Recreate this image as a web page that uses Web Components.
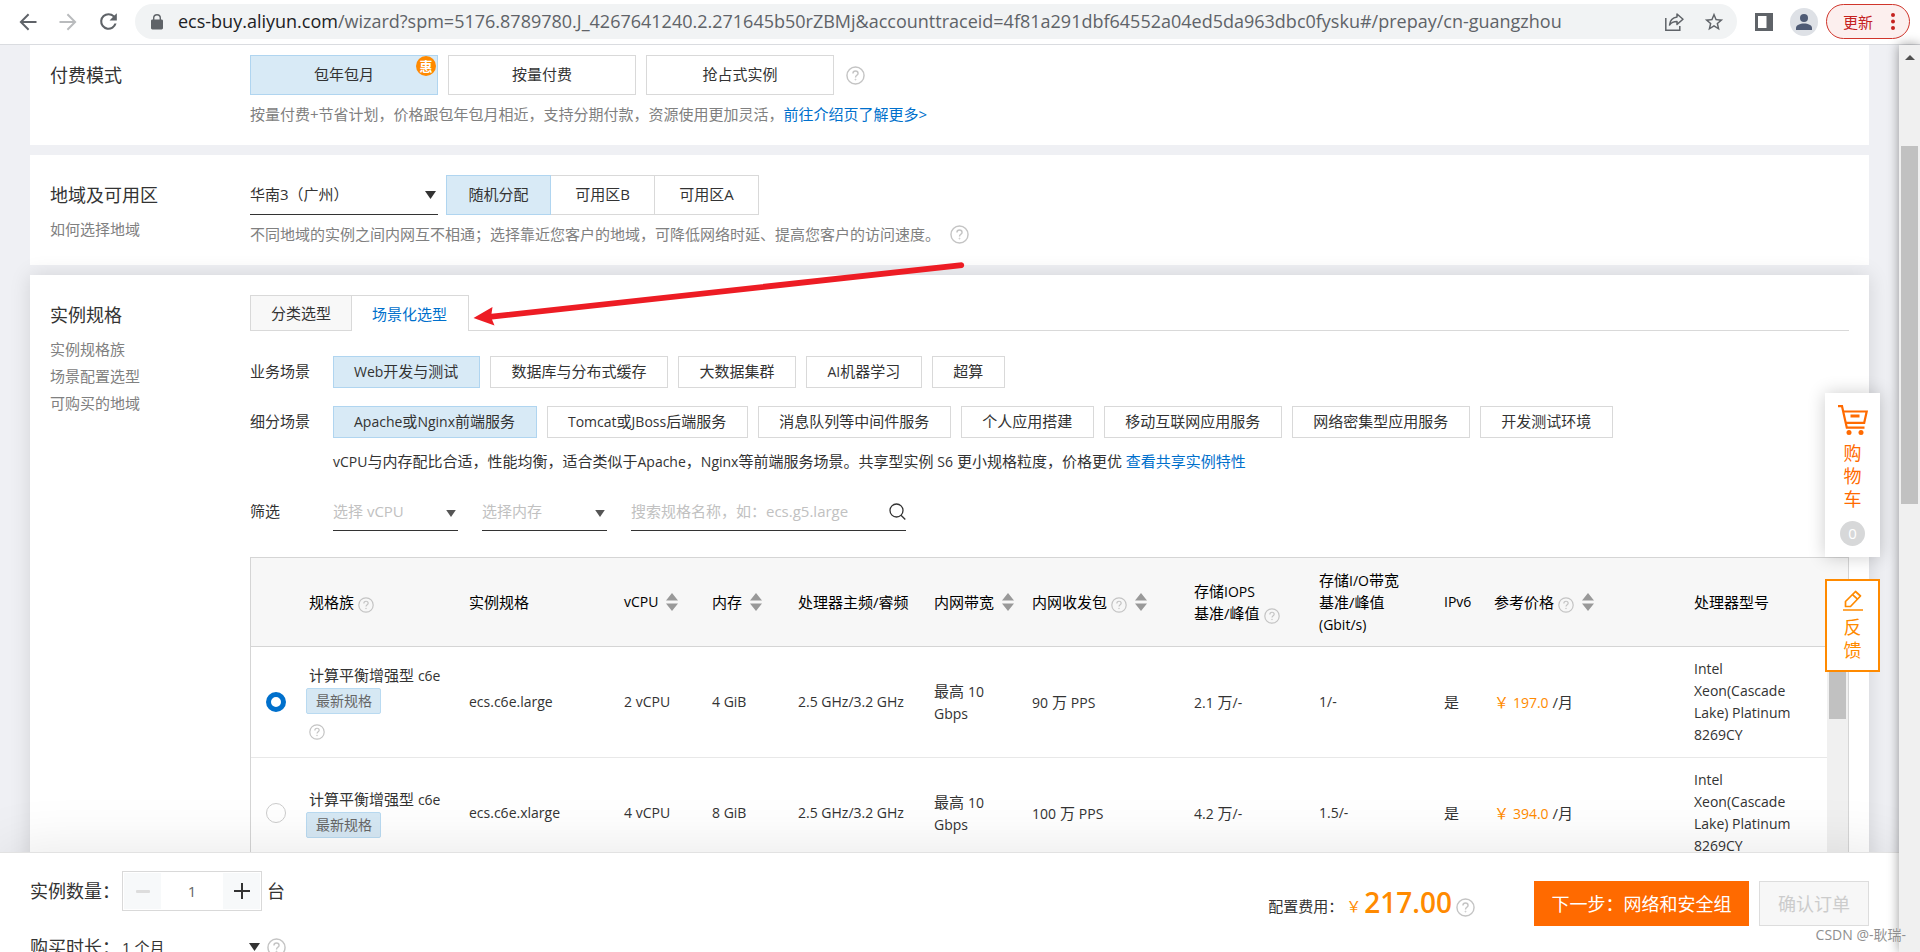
<!DOCTYPE html>
<html lang="zh-CN">
<head>
<meta charset="utf-8">
<title>云服务器 ECS 购买</title>
<style>
  html, body { margin: 0; height: 100%; }
  body {
    font: 15px/22px "Open Sans", "Noto Sans CJK SC", sans-serif;
    color: #333;
    overflow: hidden;
  }
</style>
</head>
<body>
<buy-app></buy-app>

<script>
const BASE = `
  * { box-sizing: border-box; }
  button, input, select { font: inherit; color: inherit; margin: 0; }
  button { cursor: pointer; }
  a { color: #0070cc; text-decoration: none; }
  svg { display: block; }
  .en { font-size: 14px; }
  span.en { line-height: 1; }
`;

function define(name, css, html) {
  const template = document.createElement('template');
  template.innerHTML = `<style>${BASE}${css}</style>${html}`;
  customElements.define(name, class extends HTMLElement {
    constructor() {
      super();
      this.attachShadow({ mode: 'open' }).append(template.content.cloneNode(true));
    }
  });
}

/* Round question mark */
define('help-icon', `
  :host { display: inline-block; width: 19px; height: 19px; color: #c4c4c4; flex: none; }
  :host([small]) { width: 16px; height: 16px; }
  svg { width: 100%; height: 100%; }
`, `
  <svg viewBox="0 0 20 20" fill="none" stroke="currentColor" stroke-width="1.5" aria-hidden="true">
    <circle cx="10" cy="10" r="9"/>
    <path d="M7.3 8C7.3 6.3 8.5 5.3 10 5.3s2.7 1 2.7 2.5c0 1.8-2.7 2.2-2.7 4.2"/>
    <circle cx="10" cy="14.3" r=".5" stroke-width="1"/>
  </svg>`);

/* Up and down triangles of a sortable column */
define('sort-icon', `
  :host { display: inline-block; width: 12px; height: 18px; color: #999; flex: none; }
`, `
  <svg width="12" height="18" viewBox="0 0 12 18" fill="currentColor" aria-hidden="true">
    <path d="M6 0l6 7.5H0zM6 18l6-7.5H0z"/>
  </svg>`);

/* Boxed choice; "selected" gives it the blue fill */
define('choice-button', `
  :host { display: inline-block; position: relative; }
  button {
    display: block; width: 100%; height: 32px; padding: 0 21px 2px 20px; line-height: 28px;
    background: #fff; border: 1px solid #d9d9d9; white-space: nowrap;
  }
  :host([large]) button { height: 40px; line-height: 36px; padding: 0 0 2px; }
  :host([selected]) button { background: #d8eaf6; border-color: #b0d5f0; }
`, `<button type="button"><slot></slot></button><slot name="badge"></slot>`);

/* Underlined drop-down */
define('line-select', `
  :host { display: block; position: relative; height: 40px; border-bottom: 1px solid #333; color: #333; }
  :host([empty]) { height: 38px; }
  :host([plain]) { height: 32px; border: 0; }
  select {
    appearance: none; width: 100%; height: 100%; border: 0; padding: 0 0 1px; margin: 0;
    background: none; outline: none;
  }
  :host([empty]) select { color: #c1c1c1; }
  svg { position: absolute; right: 2px; top: 50%; margin-top: -4px; pointer-events: none; }
  :host([empty]) svg { color: #555; width: 10px; height: 7px; margin-top: -2px; }
`, `
  <select aria-label="选择"><option></option></select>
  <svg width="11" height="8" viewBox="0 0 11 8" fill="currentColor" aria-hidden="true"><path d="M0 0h11L5.500 8z"/></svg>`);

/* White section with a title column and a content column */
define('form-card', `
  :host { display: flex; padding: 20px; background: #fff; }
  aside { flex: 0 0 200px; }
  h2 { margin: 0; font-size: 18px; font-weight: 400; line-height: 40px; }
  .links { display: flex; flex-direction: column; padding-top: 1px; line-height: 27px; color: #808080; }
  .content { flex: 1; min-width: 0; }
`, `
  <aside><h2><slot name="title"></slot></h2><div class="links"><slot name="links"></slot></div></aside>
  <div class="content"><slot></slot></div>`);

define('browser-toolbar', `
  :host {
    display: flex; align-items: center; height: 45px; padding: 0 10px 1px 8px;
    background: #fff; border-bottom: 1px solid #dadce0; flex: none; color: #5f6368;
  }
  .nav { width: 40px; height: 40px; padding: 0; border: 0; background: none; display: grid; place-items: center; color: inherit; }
  .nav.off { color: #b9bbbd; }
  .address {
    flex: 1; min-width: 0; display: flex; align-items: center; height: 35px; margin-left: 7px;
    padding: 0 12px 0 16px; border-radius: 18px; background: #f1f3f4;
  }
  .url { flex: 1; margin-left: 15px; padding-bottom: 2px; font-size: 18px; line-height: 30px; white-space: nowrap; overflow: hidden; }
  .url b { font-weight: 400; color: #202124; }
  .tool { border: 0; padding: 0; background: none; color: inherit; display: block; }
  .star { margin-left: 18px; }
  .panel { margin: 0 17px 0 18px; }
  .update {
    display: flex; align-items: center; justify-content: space-between; width: 84px; height: 35px;
    margin-left: 8px; padding: 0 14px 0 16px; border: 1px solid #d0352b; border-radius: 18px;
    background: #fcefee; color: #c5221f;
  }
`, `
  <button class="nav" aria-label="后退"><svg width="24" height="24" viewBox="0 0 24 24" fill="currentColor"><path d="M20.500 11H7.300l6-6L11.900 3.600 3.500 12l8.400 8.400 1.400-1.400-6-6h13.200z"/></svg></button>
  <button class="nav off" aria-label="前进"><svg width="24" height="24" viewBox="0 0 24 24" fill="currentColor"><path d="M3.500 11h13.200l-6-6 1.400-1.400 8.400 8.400-8.400 8.400-1.400-1.400 6-6H3.500z"/></svg></button>
  <button class="nav" aria-label="重新加载"><svg width="25" height="25" viewBox="0 0 24 24" fill="currentColor"><path d="M17.650 6.350A7.958 7.958 0 0 0 12 4a8 8 0 1 0 7.730 10h-2.080A6 6 0 1 1 12 6c1.660 0 3.140.69 4.220 1.780L13 11h7V4z"/></svg></button>
  <div class="address">
    <svg width="12" height="16" viewBox="0 0 12 16" fill="currentColor"><path d="M10.600 5.500H10V4a4 4 0 0 0-8 0v1.500h-.6C.6 5.500 0 6.100 0 6.900v7.200c0 .8.6 1.400 1.400 1.400h9.200c.8 0 1.400-.6 1.400-1.400V6.900c0-.8-.6-1.400-1.400-1.400zM3.400 4a2.600 2.600 0 0 1 5.200 0v1.500H3.400z"/></svg>
    <div class="url"><b>ecs-buy.aliyun.com</b>/wizard?spm=5176.8789780.J_4267641240.2.271645b50rZBMj&amp;accounttraceid=4f81a291dbf64552a04ed5da963dbc0fysku#/prepay/cn-guangzhou</div>
    <button class="tool" aria-label="分享"><svg width="21" height="20" viewBox="0 0 21 20" fill="none" stroke="currentColor" stroke-width="1.500"><path d="M1.800 6v12.200h14V14"/><path d="M13 2l6 5.200-6 5.200V9.500c-3.500 0-5.800 1-7.500 3.500.5-4.500 3-7.300 7.500-7.900z" stroke-linejoin="round"/></svg></button>
    <button class="tool star" aria-label="收藏"><svg width="22" height="22" viewBox="0 0 24 24" fill="currentColor"><path d="M22 9.240l-7.190-.62L12 2 9.190 8.630 2 9.240l5.460 4.730L5.820 21 12 17.270 18.180 21l-1.630-7.030zM12 15.400l-3.760 2.270 1-4.280-3.320-2.880 4.380-.38L12 6.100l1.710 4.040 4.380.38-3.320 2.880 1 4.280z"/></svg></button>
  </div>
  <button class="tool panel" aria-label="侧边栏"><svg width="18" height="18" viewBox="0 0 18 18"><path fill="currentColor" fill-rule="evenodd" d="M0 0h18v18H0zM3 3v12h8.500V3z"/></svg></button>
  <button class="tool" aria-label="用户"><svg width="28" height="28" viewBox="0 0 28 28"><circle cx="14" cy="14" r="14" fill="#dee1e6"/><circle cx="14" cy="10" r="4" fill="#4f5b75"/><path fill="#4f5b75" d="M6 22v-2c0-3 4-4.600 8-4.600s8 1.600 8 4.600v2z"/></svg></button>
  <button class="update">更新<svg width="4" height="17" viewBox="0 0 4 17" fill="currentColor"><circle cx="2" cy="2" r="2"/><circle cx="2" cy="8.500" r="2"/><circle cx="2" cy="15" r="2"/></svg></button>
`);

define('page-scrollbar', `
  :host { display: block; padding: 0 2px; background: #f0f0f0; box-shadow: 0 0 12px rgba(0,0,0,.4); z-index: 5; }
  svg { margin: 10px auto 0; }
  .thumb { height: 358px; margin-top: 86px; background: #c1c1c1; }
`, `
  <svg width="10" height="5" viewBox="0 0 10 5" fill="#505050"><path d="M5 0l5 5H0z"/></svg>
  <div class="thumb"></div>`);

const QUERY = '<help-icon small></help-icon>';
const SORT = '<sort-icon></sort-icon>';
const specs = [
  { name: 'ecs.c6e.large', cpu: '2 vCPU', mem: '4 GiB', pps: '90', iops: '2.1', io: '1/-', price: '197.0', on: true },
  { name: 'ecs.c6e.xlarge', cpu: '4 vCPU', mem: '8 GiB', pps: '100', iops: '4.2', io: '1.5/-', price: '394.0' },
];
const rows = specs.map((s, i) => `
  <tr>
    <td class="pick"><input type="radio" name="spec" aria-label="${s.name}"${s.on ? ' checked' : ''}></td>
    <td><div>计算平衡增强型 <span class="en">c6e</span></div><span class="tag">最新规格</span>${s.on ? `<div class="q">${QUERY}</div>` : ''}</td>
    <td class="en">${s.name}</td>
    <td class="en">${s.cpu}</td>
    <td class="en">${s.mem}</td>
    <td class="en">2.5 GHz/3.2 GHz</td>
    <td>最高 <span class="en">10<br>Gbps</span></td>
    <td><span class="en">${s.pps}</span> 万 <span class="en">PPS</span></td>
    <td><span class="en">${s.iops}</span> 万<span class="en">/-</span></td>
    <td class="en">${s.io}</td>
    <td>是</td>
    <td><span class="price">￥ <span class="en">${s.price}</span></span> /月</td>
    <td class="en">Intel<br>Xeon(Cascade<br>Lake) Platinum<br>8269CY</td>
    ${i ? '' : `<td class="bar" rowspan="${specs.length}"><div></div></td>`}
  </tr>`).join('');

define('spec-table', `
  :host { display: block; border: 1px solid #d5d5d5; }
  table { width: 100%; border-collapse: separate; border-spacing: 0; table-layout: fixed; }
  th, td { padding: 11px 0 11px 10px; text-align: left; vertical-align: middle; font-weight: 400; white-space: nowrap; }
  th { background: #f7f7f7; border-bottom: 1px solid #d5d5d5; color: #000; }
  td { border-bottom: 1px solid #e8e8e8; height: 111px; }
  .pick { padding-left: 15px; }
  input {
    appearance: none; display: block; width: 20px; height: 20px; border: 1px solid #ccc;
    border-radius: 50%; background: #fff;
  }
  input:checked { border: 5px solid #0070cc; }
  .head { display: flex; align-items: center; }
  .head sort-icon { margin-left: 8px; }
  help-icon { margin-left: 4px; vertical-align: -5px; }
  .head help-icon { align-self: flex-end; }
  .q { height: 16px; margin-top: 10px; line-height: 16px; }
  .q help-icon { margin: 0; vertical-align: top; }
  .tag {
    display: block; width: 75px; height: 26px; margin: 2px 0 0 -3px; padding-left: 9px; border: 1px solid #b9daf1;
    border-radius: 2px; background: #d6e8f4; color: #666; font-size: 14px; line-height: 24px;
  }
  .price { color: #ff8a00; }
  .bar { padding: 0; vertical-align: top; background: #f0f0f0; border: 0; }
  .bar div { width: 17px; height: 72px; margin: 0 auto; background: #c1c1c1; }
`, `
  <table>
    <colgroup><col style="width:48px"><col style="width:160px"><col style="width:155px"><col style="width:88px"><col style="width:86px"><col style="width:136px"><col style="width:98px"><col style="width:162px"><col style="width:125px"><col style="width:125px"><col style="width:50px"><col><col style="width:143px"><col style="width:21px"></colgroup>
    <thead><tr>
      <th></th>
      <th><div class="head">规格族${QUERY}</div></th>
      <th>实例规格</th>
      <th class="en"><div class="head">vCPU${SORT}</div></th>
      <th><div class="head">内存${SORT}</div></th>
      <th>处理器主频/睿频</th>
      <th><div class="head">内网带宽${SORT}</div></th>
      <th><div class="head">内网收发包${QUERY}${SORT}</div></th>
      <th>存储<span class="en">IOPS</span><br>基准/峰值${QUERY}</th>
      <th>存储<span class="en">I/O</span>带宽<br>基准/峰值<br><span class="en">(Gbit/s)</span></th>
      <th class="en">IPv6</th>
      <th><div class="head">参考价格${QUERY}${SORT}</div></th>
      <th>处理器型号</th>
      <th></th>
    </tr></thead>
    <tbody>${rows}</tbody>
  </table>`);

/* Shopping cart and feedback tabs floating at the right */
define('side-tools', `
  :host { display: flex; flex-direction: column; gap: 22px; width: 55px; font-size: 18px; line-height: 23px; }
  button, a { display: flex; flex-direction: column; align-items: center; width: 55px; background: #fff; }
  button { height: 164px; padding: 12px 0 0; border: 0; box-shadow: 0 0 18px rgba(0,0,0,.2); color: #ff6a00; }
  a { height: 93px; padding-top: 9px; border: 2px solid #ff8a00; color: #ff8a00; }
  .word { width: 18px; text-align: center; }
  button .word { margin-top: 7px; }
  a .word { margin-top: 5px; }
  .count { width: 25px; height: 25px; margin-top: 10px; border-radius: 50%; background: #d7d8d9; color: #fff; font-size: 15px; line-height: 25px; }
`, `
  <button type="button">
    <svg width="30" height="30" viewBox="0 0 30 30" fill="none" stroke="currentColor" stroke-width="2.200"><path d="M0 1.200h4L8.800 22.700H26.500"/><path d="M5 6.500h23.700l-2.500 11.300H8"/><path d="M12.500 11h9" stroke-width="3"/><g fill="currentColor" stroke="none"><circle cx="11" cy="27.500" r="2.500"/><circle cx="23" cy="27.500" r="2.500"/></g></svg>
    <span class="word">购物车</span><span class="count">0</span>
  </button>
  <a href="#feedback">
    <svg width="20" height="21" viewBox="0 0 20 21" fill="none" stroke="currentColor" stroke-width="1.700"><path d="M2.500 16.500v-5L12.500 1.500l5 4.500L7.500 16.500z" stroke-linejoin="round"/><path d="M9.500 4.700l5 4.500M0 20h20"/></svg>
    <span class="word">反馈</span>
  </a>`);

define('order-bar', `
  :host {
    display: flex; justify-content: space-between; align-items: flex-start; flex: 0 0 100px; min-height: 0;
    padding: 18px 30px 0; background: #fff; border-top: 1px solid #e2e2e2; box-shadow: 0 0 60px rgba(0,0,0,.1);
    position: relative; z-index: 2;
  }
  .left { display: flex; flex-direction: column; gap: 20px; }
  .field { display: flex; align-items: center; height: 40px; font-size: 18px; }
  .field + .field { height: 32px; }
  label { width: 92px; }
  .stepper { display: flex; width: 140px; height: 40px; margin-right: 5px; border: 1px solid #d9d9d9; padding: 1px; }
  .stepper button { flex: 0 0 37px; border: 0; padding: 0; background: #f7f9fa; display: grid; place-items: center; }
  .stepper input { flex: 1; min-width: 0; border: 0; padding: 0; text-align: center; font-size: 15px; color: #666; }
  line-select { width: 140px; margin-right: 5px; font-size: 15px; }
  .right { display: flex; align-items: center; padding-top: 10px; }
  .sum { color: #ff8a00; margin-left: 3px; }
  .total { margin: 0 4px 4px 3px; color: #ff8a00; font-size: 28px; line-height: 36px; font-weight: 600; }
  .right help-icon { margin-top: 7px; }
  .go, .confirm { height: 45px; font-size: 18px; padding: 0; white-space: nowrap; }
  .caption, .sum { padding-top: 5px; }
  .go { width: 215px; margin: 0 10px 0 59px; border: 0; background: #ff6a00; color: #fff; }
  .confirm { width: 110px; border: 1px solid #ddd; background: #f7f7f7; color: #ccc; }
`, `
  <div class="left">
    <div class="field"><label for="count">实例数量：</label>
      <div class="stepper">
        <button type="button" aria-label="减少"><svg width="14" height="3"><rect width="14" height="3" rx="1" fill="#ddd"/></svg></button>
        <input id="count" type="text" value="1">
        <button type="button" aria-label="增加"><svg width="16" height="16" viewBox="0 0 16 16" fill="none" stroke="#333" stroke-width="2"><path d="M8 0v16M0 8h16"/></svg></button>
      </div>台</div>
    <div class="field"><label>购买时长：</label><line-select plain data-value="1 个月"></line-select><help-icon></help-icon></div>
  </div>
  <div class="right">
    <span class="caption">配置费用：</span><span class="sum">￥</span><span class="total">217.00</span><help-icon></help-icon>
    <button class="go" type="button">下一步：网络和安全组</button>
    <button class="confirm" type="button" disabled>确认订单</button>
  </div>`);

define('buy-app', `
  :host { display: flex; flex-direction: column; height: 100vh; }
  .view { flex: 1; min-height: 0; display: grid; grid-template-columns: minmax(0, 1fr) 21px; }
  .page { position: relative; display: flex; flex-direction: column; min-height: 0; background: #eff0f4; }
  main { flex: 1 1 0; min-height: 0; overflow: hidden; display: flex; flex-direction: column; gap: 10px; padding: 0 30px; }
  form-card { flex: none; }
  .first { padding-top: 10px; }
  .spec { box-shadow: 0 0 20px rgba(0,0,0,.12); }
  .line { display: flex; align-items: center; gap: 10px; }
  .pay choice-button { width: 188px; }
  .pay help-icon { margin-left: 2px; }
  .badge {
    position: absolute; right: 2px; top: 1px; width: 20px; height: 20px; border-radius: 50%;
    background: #ff8a00; color: #fff; font-size: 13px; line-height: 20px; text-align: center; font-weight: 700;
  }
  .note { display: flex; align-items: center; margin-top: 8px; color: #808080; }
  .note help-icon { margin-left: 10px; }
  .zones { display: flex; margin-left: -2px; }
  .zones choice-button { width: 105px; margin-right: -1px; }
  .zones [selected] { z-index: 1; }
  .region { width: 188px; }
  a.side { color: inherit; }
  .tabs { display: flex; height: 36px; }
  .tabs button { padding: 0 20px; border: 1px solid #d9d9d9; background: #f8f8f8; }
  .tabs .on { padding-right: 21px; border-left: 0; border-bottom: 0; background: #fff; color: #0070cc; }
  .tabs i { flex: 1; border-bottom: 1px solid #d9d9d9; }
  .options { display: grid; grid-template-columns: 83px minmax(0, 1fr); align-items: center; row-gap: 18px; margin-top: 25px; }
  .options > span, .filters > span { padding-bottom: 2px; }
  .about { margin: 12px 0 0 83px; }
  .filters { display: flex; align-items: center; margin-top: 21px; }
  .filters > span { width: 83px; }
  .filters line-select { width: 125px; margin-right: 24px; }
  .search { display: flex; align-items: center; width: 275px; height: 38px; border-bottom: 1px solid #333; }
  .search input { flex: 1; min-width: 0; border: 0; padding: 0 0 2px; outline: none; background: none; }
  .search input::placeholder { color: #c1c1c1; opacity: 1; }
  .search button { border: 0; padding: 0; background: none; }
  spec-table { margin-top: 26px; }
  side-tools { position: absolute; right: 19px; top: 348px; z-index: 3; }
  .arrow { position: absolute; left: 472px; top: 215px; z-index: 1; pointer-events: none; }
  .mark { position: absolute; right: 14px; bottom: 6px; z-index: 9; font-size: 14px; color: #8f8f8f; white-space: nowrap; text-shadow: 0 0 1px #fff; }
`, `
  <browser-toolbar></browser-toolbar>
  <div class="view">
    <div class="page">
      <main>
        <form-card class="first">
          <span slot="title">付费模式</span>
          <div class="line pay">
            <choice-button large selected>包年包月<span class="badge" slot="badge">惠</span></choice-button>
            <choice-button large>按量付费</choice-button>
            <choice-button large>抢占式实例</choice-button>
            <help-icon></help-icon>
          </div>
          <div class="note"><span>按量付费+节省计划，价格跟包年包月相近，支持分期付款，资源使用更加灵活，<a href="#plan">前往介绍页了解更多&gt;</a></span></div>
        </form-card>

        <form-card>
          <span slot="title">地域及可用区</span>
          <a class="side" slot="links" href="#region">如何选择地域</a>
          <div class="line">
            <line-select class="region" data-value="华南3（广州）"></line-select>
            <div class="zones">
              <choice-button large selected>随机分配</choice-button>
              <choice-button large>可用区B</choice-button>
              <choice-button large>可用区A</choice-button>
            </div>
          </div>
          <div class="note"><span>不同地域的实例之间内网互不相通；选择靠近您客户的地域，可降低网络时延、提高您客户的访问速度。</span><help-icon></help-icon></div>
        </form-card>

        <form-card class="spec">
          <span slot="title">实例规格</span>
          <a class="side" slot="links" href="#family">实例规格族</a>
          <a class="side" slot="links" href="#scene">场景配置选型</a>
          <a class="side" slot="links" href="#area">可购买的地域</a>
          <div class="tabs"><button type="button">分类选型</button><button type="button" class="on">场景化选型</button><i></i></div>
          <div class="options">
            <span>业务场景</span>
            <div class="line">
              <choice-button selected><span class="en">Web</span>开发与测试</choice-button>
              <choice-button>数据库与分布式缓存</choice-button>
              <choice-button>大数据集群</choice-button>
              <choice-button><span class="en">AI</span>机器学习</choice-button>
              <choice-button>超算</choice-button>
            </div>
            <span>细分场景</span>
            <div class="line">
              <choice-button selected><span class="en">Apache</span>或<span class="en">Nginx</span>前端服务</choice-button>
              <choice-button><span class="en">Tomcat</span>或<span class="en">JBoss</span>后端服务</choice-button>
              <choice-button>消息队列等中间件服务</choice-button>
              <choice-button>个人应用搭建</choice-button>
              <choice-button>移动互联网应用服务</choice-button>
              <choice-button>网络密集型应用服务</choice-button>
              <choice-button>开发测试环境</choice-button>
            </div>
          </div>
          <div class="about"><span class="en">vCPU</span>与内存配比合适，性能均衡，适合类似于<span class="en">Apache</span>，<span class="en">Nginx</span>等前端服务场景。共享型实例 <span class="en">S6</span> 更小规格粒度，价格更优 <a href="#shared">查看共享实例特性</a></div>
          <div class="filters">
            <span>筛选</span>
            <line-select empty data-value="选择 vCPU"></line-select>
            <line-select empty data-value="选择内存"></line-select>
            <div class="search">
              <input type="text" aria-label="搜索规格名称" placeholder="搜索规格名称，如：ecs.g5.large">
              <button type="button" aria-label="搜索"><svg width="17" height="17" viewBox="0 0 17 17" fill="none" stroke="#333" stroke-width="1.300"><circle cx="7.500" cy="7.500" r="6.500"/><path d="M12 12.300l4.300 4.200"/></svg></button>
            </div>
          </div>
          <spec-table></spec-table>
        </form-card>
      </main>
      <order-bar></order-bar>
      <side-tools></side-tools>
      <svg class="arrow" width="496" height="70" viewBox="0 0 496 70" fill="#ed1c24" aria-hidden="true">
        <path d="M1.500 58L20.500 47L19.500 53.800L489.500 2.200A3 3 0 0 1 490.200 8L20 59.500L22.500 65.500Z"/>
      </svg>
    </div>
    <page-scrollbar></page-scrollbar>
  </div>
  <span class="mark">CSDN @-耿瑞-</span>`);

/* Fill each drop-down with its current value */
(function fill(root) {
  root.querySelectorAll('*').forEach(el => {
    if (el.localName === 'line-select') {
      el.shadowRoot.querySelector('option').textContent = el.dataset.value;
      el.shadowRoot.querySelector('select').setAttribute('aria-label', el.dataset.value);
    }
    if (el.shadowRoot) fill(el.shadowRoot);
  });
})(document);
</script>
</body>
</html>
